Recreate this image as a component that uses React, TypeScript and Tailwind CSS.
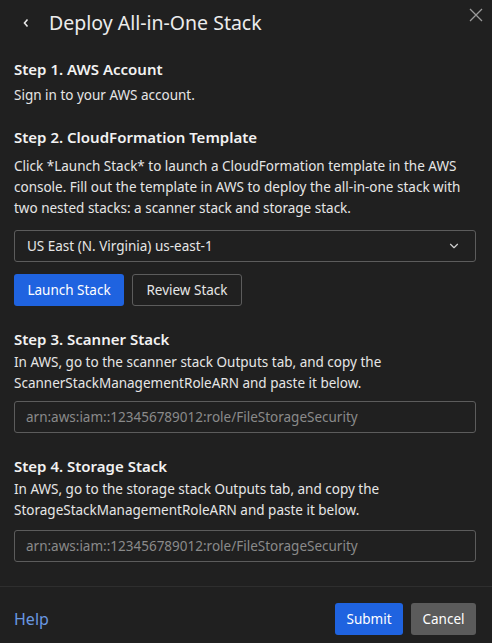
import { ChevronDown } from 'lucide-react';

const font = { fontFamily: '"Segoe UI", "Noto Sans", "Open Sans", sans-serif' };

function StepHeading({ children }: { children: React.ReactNode }) {
  return <h3 className="text-[15px] font-semibold text-[#f2f2f2] leading-[22px]">{children}</h3>;
}

function ArnInput() {
  return (
    <div className="h-[32px] border border-[#5c5c5c] rounded-[3px] flex items-center px-[11px] text-[13.5px] text-[#8a8a8a]">
      arn:aws:iam::123456789012:role/FileStorageSecurity
    </div>
  );
}

export default function App() {
  return (
    <div className="w-[492px] h-[643px] bg-[#202020] text-[#e6e6e6] flex flex-col" style={font}>
      {/* Header */}
      <div className="relative h-[46px] flex items-center">
        <svg width="8" height="10" viewBox="0 0 8 10" className="ml-[22px]">
          <path d="M5.5 1.5 L2.5 5 L5.5 8.5" stroke="#e8e8e8" strokeWidth="1.6" fill="none" />
        </svg>
        <h2 className="ml-[19px] text-[19.5px] text-[#ececec] leading-none">Deploy All-in-One Stack</h2>
        <svg width="14" height="14" viewBox="0 0 14 14" className="absolute right-[9px] top-[8px]">
          <path d="M1 1 L13 13 M13 1 L1 13" stroke="#9a9a9a" strokeWidth="1.3" />
        </svg>
      </div>

      {/* Body */}
      <div className="flex-1 pl-[14px] pr-[16px] pt-[12px] text-[13.5px]">
        <StepHeading>Step 1. AWS Account</StepHeading>
        <p className="mt-[5px] leading-[21px]">Sign in to your AWS account.</p>

        <div className="mt-[20px]">
          <StepHeading>Step 2. CloudFormation Template</StepHeading>
          <p className="mt-[8px] leading-[21px]">
            Click *Launch Stack* to launch a CloudFormation template in the AWS
            <br />
            console. Fill out the template in AWS to deploy the all-in-one stack with
            <br />
            two nested stacks: a scanner stack and storage stack.
          </p>
          <div className="mt-[11px] h-[32px] border border-[#5c5c5c] rounded-[3px] flex items-center justify-between pl-[12px] pr-[14px] text-[#e6e6e6]">
            <span>US East (N. Virginia) us-east-1</span>
            <ChevronDown size={14} strokeWidth={2} className="text-[#d0d0d0]" />
          </div>
          <div className="mt-[12px] flex gap-[8px]">
            <button className="h-[32px] w-[110px] bg-[#1f63e0] rounded-[3px] text-white">Launch Stack</button>
            <button className="h-[32px] w-[110px] border border-[#5c5c5c] rounded-[3px] text-[#e6e6e6]">Review Stack</button>
          </div>
        </div>

        <div className="mt-[22px]">
          <StepHeading>Step 3. Scanner Stack</StepHeading>
          <p className="mt-[2px] leading-[21px]">
            In AWS, go to the scanner stack Outputs tab, and copy the
            <br />
            ScannerStackManagementRoleARN and paste it below.
          </p>
          <div className="mt-[7px]">
            <ArnInput />
          </div>
        </div>

        <div className="mt-[22px]">
          <StepHeading>Step 4. Storage Stack</StepHeading>
          <p className="mt-[2px] leading-[21px]">
            In AWS, go to the storage stack Outputs tab, and copy the
            <br />
            StorageStackManagementRoleARN and paste it below.
          </p>
          <div className="mt-[9px]">
            <ArnInput />
          </div>
        </div>
      </div>

      {/* Footer */}
      <div className="h-[57px] border-t border-[#2e2e2e] flex items-center justify-between pl-[14px] pr-[16px]">
        <a className="text-[16px] text-[#6a98e0] pt-[8px]">Help</a>
        <div className="flex gap-[8px] pt-[8px] text-[13.5px]">
          <button className="h-[32px] w-[68px] bg-[#1f63e0] rounded-[3px] text-white">Submit</button>
          <button className="h-[32px] w-[65px] bg-[#5b5b5b] rounded-[3px] text-white">Cancel</button>
        </div>
      </div>
    </div>
  );
}
